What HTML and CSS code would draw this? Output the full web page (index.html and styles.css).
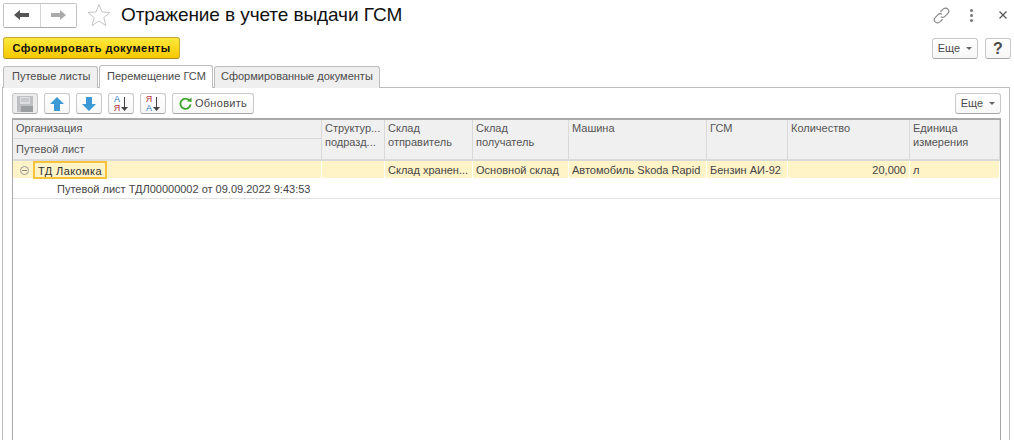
FILE: index.html
```html
<!DOCTYPE html>
<html lang="ru">
<head>
    <meta charset="UTF-8">
    <title>Отражение в учете выдачи ГСМ</title>
    <link rel="stylesheet" href="styles.css">
</head>
<body>
    <!-- Title bar -->
    <header class="title-bar">
        <div class="nav-group">
            <button class="nav-btn" aria-label="Назад">
                <svg width="16" height="12" viewBox="0 0 16 12"><path d="M0 6 L6 1 V4 H15 V8 H6 V11 Z" fill="#555"/></svg>
            </button>
            <button class="nav-btn" aria-label="Вперед">
                <svg width="16" height="12" viewBox="0 0 16 12"><path d="M16 6 L10 1 V4 H1 V8 H10 V11 Z" fill="#aaa"/></svg>
            </button>
        </div>
        <svg class="star" width="24" height="24" viewBox="0 0 24 24"><path d="M12 1.5 L15 9 L23 9.5 L16.8 14.6 L18.9 22.5 L12 18 L5.1 22.5 L7.2 14.6 L1 9.5 L9 9 Z" fill="#fff" stroke="#c4c4c4"/></svg>
        <h1>Отражение в учете выдачи ГСМ</h1>
        <div class="title-icons">
            <svg class="link-icon" width="17" height="17" viewBox="0 0 16 16" fill="none" stroke="#888" stroke-width="1.1"><path d="M7 4.5 L9.5 2 C11 .8 13 1 14.2 2.2 C15.2 3.4 15 5 14 6 L11 9 C10 10 8.5 10 7.5 9"/><path d="M9 11.5 L6.5 14 C5 15.2 3 15 1.8 13.8 C.8 12.6 1 11 2 10 L5 7 C6 6 7.5 6 8.5 7"/></svg>
            <span class="dots"><i></i><i></i><i></i></span>
            <svg width="8" height="8" viewBox="0 0 8 8" stroke="#555" stroke-width="1.2"><path d="M.5 .5 L7.5 7.5 M7.5 .5 L.5 7.5"/></svg>
        </div>
    </header>

    <!-- Command bar -->
    <div class="command-bar">
        <button class="btn-primary">Сформировать документы</button>
        <div class="command-right">
            <button class="btn more">Еще <span class="caret"></span></button>
            <button class="btn help">?</button>
        </div>
    </div>

    <!-- Tabs -->
    <div class="tabs">
        <div class="tab tab-first">Путевые листы</div>
        <div class="tab active">Перемещение ГСМ</div>
        <div class="tab">Сформированные документы</div>
    </div>

    <div class="panel">
        <div class="toolbar">
            <button class="btn icon-btn disabled" aria-label="Записать">
                <svg width="16" height="16" viewBox="0 0 16 16"><path d="M0 0 H16 V16 H0 Z" fill="#bcc0c2"/><path d="M3 1 H13 V8 H3 Z" fill="#dcdee0"/><path d="M4 3 H12 M4 5 H12" stroke="#b4b8bb"/><path d="M4 10 H16 V16 H4 Z" fill="#9a9ea1"/></svg>
            </button>
            <button class="btn icon-btn" aria-label="Вверх">
                <svg width="14" height="14" viewBox="0 0 14 14"><path d="M7 0 L14 7 H10 V14 H4 V7 H0 Z" fill="#3b9ad6"/></svg>
            </button>
            <button class="btn icon-btn" aria-label="Вниз">
                <svg width="14" height="14" viewBox="0 0 14 14"><path d="M7 14 L14 7 H10 V0 H4 V7 H0 Z" fill="#3b9ad6"/></svg>
            </button>
            <button class="btn icon-btn sort" aria-label="Сортировать по возрастанию">
                <span class="sort-letters"><b class="blue">А</b><b class="red">Я</b></span>
                <svg width="7" height="14" viewBox="0 0 7 14"><path d="M3 0 H4 V10 H7 L3.5 14 L0 10 H3 Z" fill="#444"/></svg>
            </button>
            <button class="btn icon-btn sort" aria-label="Сортировать по убыванию">
                <span class="sort-letters"><b class="red">Я</b><b class="blue">А</b></span>
                <svg width="7" height="14" viewBox="0 0 7 14"><path d="M3 0 H4 V10 H7 L3.5 14 L0 10 H3 Z" fill="#444"/></svg>
            </button>
            <button class="btn refresh">
                <svg width="13" height="13" viewBox="0 0 14 14" fill="none"><path d="M11.5 4 A5.5 5.5 0 1 0 12.5 8" stroke="#3fa52e" stroke-width="2"/><path d="M8.5 4.5 L13.5 5.5 L13.5 0.5 Z" fill="#3fa52e"/></svg>
                <span>Обновить</span>
            </button>
            <button class="btn more toolbar-more">Еще <span class="caret"></span></button>
        </div>

        <!-- Table -->
        <div class="table">
            <div class="grid-row head">
                <div class="head-stack">
                    <div class="th">Организация</div>
                    <div class="th">Путевой лист</div>
                </div>
                <div class="th"><span class="clip">Структур...</span><span class="clip">подразд...</span></div>
                <div class="th">Склад<br>отправитель</div>
                <div class="th">Склад<br>получатель</div>
                <div class="th">Машина</div>
                <div class="th">ГСМ</div>
                <div class="th">Количество</div>
                <div class="th">Единица<br>измерения</div>
            </div>
            <div class="grid-row row-group">
                <div class="td first">
                    <span class="collapse"></span>
                    <span class="current">ТД Лакомка</span>
                </div>
                <div class="td"></div>
                <div class="td">Склад хранен...</div>
                <div class="td">Основной склад</div>
                <div class="td">Автомобиль Skoda Rapid</div>
                <div class="td">Бензин АИ-92</div>
                <div class="td num">20,000</div>
                <div class="td">л</div>
            </div>
            <div class="row-detail">Путевой лист ТДЛ00000002 от 09.09.2022 9:43:53</div>
        </div>
    </div>
</body>
</html>
```

FILE: styles.css
```css
* {
    box-sizing: border-box;
}

body {
    font-family: "Liberation Sans", Arial, sans-serif;
    font-size: 11px;
    color: #4b4b4b;
    background-color: #fff;
    margin: 0;
    padding: 3px 3px 0 3px;
    height: 443px;
    overflow: hidden;
}

button {
    font-family: inherit;
    font-size: 11px;
    padding: 0;
    cursor: pointer;
}

/* Title bar */
.title-bar {
    display: flex;
    align-items: center;
    height: 24px;
}
.nav-group {
    display: flex;
    width: 74px;
    height: 25px;
    border: 1px solid #c3c3c3;
    border-bottom-color: #aaa;
    border-radius: 2px;
}
.nav-btn {
    flex: 1;
    background: #fff;
    border: none;
    display: flex;
    align-items: center;
    justify-content: center;
}
.nav-btn + .nav-btn {
    border-left: 1px solid #d4d4d4;
}
.star {
    margin-left: 10px;
}
h1 {
    font-size: 19px;
    font-weight: normal;
    letter-spacing: -0.08px;
    color: #111;
    margin: 0 0 0 10px;
}
.title-icons {
    margin-left: auto;
    display: flex;
    align-items: center;
    padding-right: 4px;
}
.dots {
    display: flex;
    flex-direction: column;
    gap: 2px;
    margin: 0 26px 0 20px;
}
.dots i {
    width: 3px;
    height: 3px;
    background: #777;
    border-radius: 50%;
}

/* Buttons */
.btn {
    height: 21px;
    background: linear-gradient(#fff, #f7f7f7);
    border: 1px solid #c8c8c8;
    border-bottom-color: #a8a8a8;
    border-radius: 3px;
    color: #4b4b4b;
}
.btn-primary {
    width: 177px;
    height: 22px;
    background: linear-gradient(#fde93c, #f8c800);
    border: 1px solid #c3a73a;
    border-bottom-color: #a89020;
    border-radius: 3px;
    color: #111;
    font-weight: bold;
    letter-spacing: 0.47px;
}
.more {
    width: 46px;
    padding-bottom: 2px;
}
.caret {
    display: inline-block;
    margin: 0 0 2px 3px;
    border-left: 3px solid transparent;
    border-right: 3px solid transparent;
    border-top: 3px solid #666;
}

/* Command bar */
.command-bar {
    display: flex;
    align-items: flex-start;
    justify-content: space-between;
    margin-top: 10px;
    height: 28px;
}
.command-right {
    display: flex;
    gap: 7px;
    padding: 1px 0 0 0;
}
.help {
    width: 26px;
    font-size: 16px;
    font-weight: bold;
    line-height: 1;
}

/* Tabs */
.tabs {
    display: flex;
    height: 23px;
    gap: 1px;
    position: relative;
    z-index: 1;
}
.tab {
    height: 22px;
    margin-top: 1px;
    padding: 3px 0 0 6px;
    background: #efefef;
    border: 1px solid #bdbdbd;
    border-bottom: none;
    border-radius: 3px 3px 0 0;
    width: 166px;
    white-space: nowrap;
}
.tab-first {
    width: 95px;
    padding-left: 8px;
}
.tab.active {
    width: 114px;
    height: 23px;
    margin-top: 0;
    padding-top: 4px;
    padding-left: 7px;
    background: #fff;
}

/* Panel */
.panel {
    width: 1008px;
    height: 353px;
    margin-left: -1px;
    margin-top: -1px;
    border: 1px solid #bdbdbd;
    border-bottom: none;
    padding: 5px 8px 0 9px;
}
.toolbar {
    display: flex;
    gap: 6px;
    height: 25px;
}
.icon-btn {
    width: 26px;
    display: flex;
    align-items: center;
    justify-content: center;
}
.icon-btn.disabled {
    background: #ececec;
}
.sort {
    gap: 1px;
}
.sort-letters {
    display: flex;
    flex-direction: column;
    font-size: 9px;
    line-height: 9px;
}
.sort-letters b {
    font-weight: normal;
}
.blue {
    color: #2b7cc0;
}
.red {
    color: #b8303a;
}
.refresh {
    width: 82px;
    display: flex;
    align-items: center;
    justify-content: center;
    gap: 3px;
}
.refresh span {
    letter-spacing: 0.3px;
    margin-top: -2px;
}
.toolbar-more {
    margin-left: auto;
}

/* Table */
.table {
    width: 989px;
    height: 322px;
    border: 1px solid #a9a9a9;
    border-bottom: none;
    border-top-width: 2px;
}
.grid-row {
    display: grid;
    grid-template-columns: 309px 63px 88px 96px 138px 81px 122px 1fr;
}
.head {
    height: 41px;
    border-bottom: 2px solid #d9d9d9;
}
.head-stack {
    display: flex;
    flex-direction: column;
}
.head-stack .th {
    flex: 1;
    padding-top: 1px;
}
.head-stack .th + .th {
    border-top: 1px solid #d9d9d9;
    padding-top: 3px;
}
.th {
    background: #f0f0f0;
    border-right: 1px solid #d9d9d9;
    padding: 1px 3px 0 3px;
    line-height: 14px;
    color: #555;
    overflow: hidden;
}
.clip {
    display: block;
    white-space: nowrap;
}
.row-group {
    height: 18px;
    background: #fff3c8;
    border-bottom: 1px solid #fff;
}
.td {
    border-right: 1px solid #fff;
    padding: 3px 3px 0 3px;
    white-space: nowrap;
    overflow: hidden;
    color: #444;
}
.td.first {
    display: flex;
    align-items: center;
    padding: 0 0 0 7px;
    overflow: visible;
}
.collapse {
    width: 9px;
    height: 9px;
    border: 1px solid #999;
    border-radius: 50%;
    position: relative;
    margin-right: 4px;
}
.collapse::after {
    content: "";
    position: absolute;
    left: 1px;
    top: 3px;
    width: 5px;
    height: 1px;
    background: #888;
}
.current {
    height: 18px;
    width: 74px;
    padding: 2px 0 0 3px;
    border: 2px solid #f7c23c;
    color: #333;
    letter-spacing: 0.4px;
}
.num {
    text-align: right;
}
.row-detail {
    height: 20px;
    padding: 4px 0 0 44px;
    border-bottom: 1px solid #e2e2e2;
    color: #444;
}
```
